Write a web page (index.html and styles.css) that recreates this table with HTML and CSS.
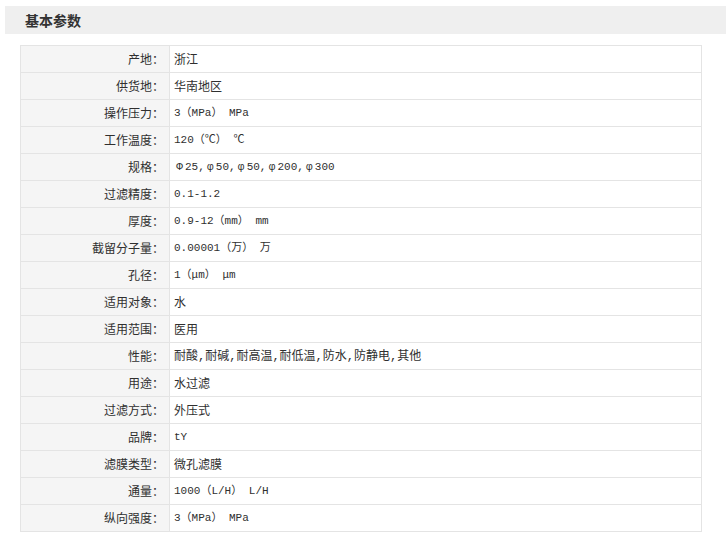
FILE: index.html
```html
<!DOCTYPE html>
<html lang="zh">
<head>
<meta charset="utf-8">
<link rel="stylesheet" href="styles.css">
</head>
<body>
<div class="page">
  <div class="section-title">基本参数</div>
  <table class="params">
    <tr><th>产地：</th><td>浙江</td></tr>
    <tr><th>供货地：</th><td>华南地区</td></tr>
    <tr><th>操作压力：</th><td class="latin">3（MPa） MPa</td></tr>
    <tr><th>工作温度：</th><td class="latin">120（℃） ℃</td></tr>
    <tr><th>规格：</th><td class="latin"><span class="phi">Φ</span>25,<span class="phi">φ</span>50,<span class="phi">φ</span>50,<span class="phi">φ</span>200,<span class="phi">φ</span>300</td></tr>
    <tr><th>过滤精度：</th><td class="latin">0.1-1.2</td></tr>
    <tr><th>厚度：</th><td class="latin">0.9-12（mm） mm</td></tr>
    <tr><th>截留分子量：</th><td class="latin">0.00001（万） 万</td></tr>
    <tr><th>孔径：</th><td class="latin">1（μm） μm</td></tr>
    <tr><th>适用对象：</th><td>水</td></tr>
    <tr><th>适用范围：</th><td>医用</td></tr>
    <tr><th>性能：</th><td class="mixed">耐酸,耐碱,耐高温,耐低温,防水,防静电,其他</td></tr>
    <tr><th>用途：</th><td>水过滤</td></tr>
    <tr><th>过滤方式：</th><td>外压式</td></tr>
    <tr><th>品牌：</th><td class="latin">tY</td></tr>
    <tr><th>滤膜类型：</th><td>微孔滤膜</td></tr>
    <tr><th>通量：</th><td class="latin">1000（L/H） L/H</td></tr>
    <tr><th>纵向强度：</th><td class="latin">3（MPa） MPa</td></tr>
  </table>
</div>
</body>
</html>
```
FILE: styles.css
```css
html, body {
  margin: 0;
  padding: 0;
  background: #fff;
}
.page {
  padding: 6px 0 0 5px;
  font-family: "Noto Sans CJK SC", "Noto Sans", sans-serif;
  color: #333;
}
.section-title {
  height: 28px;
  line-height: 28px;
  background: #efefef;
  padding-left: 20px;
  font-size: 14px;
  font-weight: bold;
  color: #333;
}
.params {
  margin: 11px 0 0 15px;
  width: 682px;
  border-collapse: collapse;
  font-size: 12px;
}
.params th,
.params td {
  border: 1px solid #e4e4e4;
  height: 26px;
  padding: 0;
  vertical-align: middle;
  line-height: 16px;
}
.params th {
  width: 143px;
  background: #f5f5f5;
  text-align: right;
  font-weight: normal;
  padding-right: 5px;
  color: #2f2f2f;
  white-space: nowrap;
}
.params td {
  background: #fff;
  text-align: left;
  padding-left: 4px;
  color: #2f2f2f;
}
.params td.latin {
  font-family: "Liberation Mono", "Noto Sans CJK SC", monospace;
  font-size: 11px;
}
.params td.mixed {
  font-family: "Liberation Mono", "Noto Sans CJK SC", monospace;
  font-size: 12px;
  padding-top: 2px;
  height: 24px;
}
.phi {
  display: inline-block;
  width: 11px;
  text-align: center;
}
```
